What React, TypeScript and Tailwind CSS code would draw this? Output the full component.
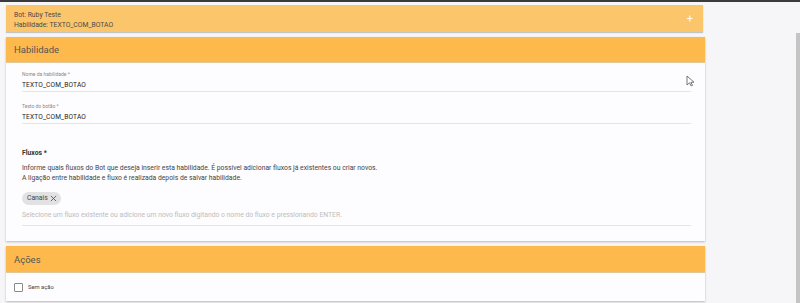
import React from 'react';

function Field({ label, value, gap }: { label: string; value: string; gap: string }) {
  return (
    <div className={gap}>
      <div className="h-[8px] text-[5px] leading-[8px] text-[#8a8a8a]">{label}</div>
      <div className="mt-[2px] h-[10px] text-[6.6px] leading-[10px] text-[#222] tracking-[0.15px]">{value}</div>
      <div className="mt-[1px] h-px bg-[#e6e6e6]" />
    </div>
  );
}

export default function App() {
  return (
    <div className="relative w-[800px] h-[303px] overflow-hidden bg-[#f6f5f7] font-['Roboto',sans-serif]">
      <div className="h-[2px] bg-[#3a3a3a]" />

      <div className="flex">
        <div className="w-[705px] pl-[6px] pt-[3px]">
          {/* Resumo do bot */}
          <div className="w-[697px] h-[27px] bg-[#fbc56b] shadow-[0_1px_1px_rgba(0,0,0,0.2)] flex items-center justify-between pl-[8px] pr-[10px]">
            <div className="pt-[3px] text-[6.8px] leading-[10px] text-[#4a4a4a]">
              <div>Bot: Ruby Teste</div>
              <div>Habilidade: TEXTO_COM_BOTAO</div>
            </div>
            <span className="text-white text-[11px] leading-none">+</span>
          </div>

          {/* Habilidade */}
          <div className="mt-[5px] bg-[#fdfcfe] shadow-[0_1px_2px_rgba(0,0,0,0.25)]">
            <div className="h-[26px] bg-[#fdb94b] flex items-center pl-[8px] pt-[2px] border-b border-[#e0c89a]">
              <span className="text-[9.5px] text-[#555]">Habilidade</span>
            </div>
            <div className="pl-[16px] pr-[14px] pb-[15px] pt-[7px]">
              <Field label="Nome da habilidade *" value="TEXTO_COM_BOTAO" gap="" />
              <Field label="Texto do botão *" value="TEXTO_COM_BOTAO" gap="mt-[10px]" />

              <div className="mt-[24px] h-[10px] text-[6.8px] leading-[10px] font-bold text-[#333]">Fluxos *</div>
              <div className="mt-[5px] text-[6.8px] leading-[10px] text-[#444]">
                <div>Informe quais fluxos do Bot que deseja inserir esta habilidade. É possível adicionar fluxos já existentes ou criar novos.</div>
                <div>A ligação entre habilidade e fluxo é realizada depois de salvar habilidade.</div>
              </div>
              <div className="mt-[7px] inline-flex items-center gap-[2px] h-[13px] rounded-full bg-[#e2e2e2] pl-[5px] pr-[4px]">
                <span className="text-[6.8px] text-[#444]">Canais</span>
                <svg width="7" height="7" viewBox="0 0 8 8" className="text-[#555]">
                  <path d="M1 1L7 7M7 1L1 7" stroke="currentColor" strokeWidth="1" />
                </svg>
              </div>
              <div className="mt-[3px] h-[10px] text-[6.8px] leading-[10px] text-[#bdbdbd]">
                Selecione um fluxo existente ou adicione um novo fluxo digitando o nome do fluxo e pressionando ENTER.
              </div>
              <div className="mt-[5px] h-px bg-[#e6e6e6]" />
            </div>
          </div>

          {/* Ações */}
          <div className="mt-[5px] bg-[#fdfcfe] shadow-[0_1px_2px_rgba(0,0,0,0.25)]">
            <div className="h-[27px] bg-[#fdb94b] flex items-center pl-[8px] pt-[2px] border-b border-[#e0c89a]">
              <span className="text-[9.5px] text-[#555]">Ações</span>
            </div>
            <div className="h-[28px] flex items-center pl-[8px] gap-[5px]">
              <div className="w-[9px] h-[9px] border border-[#888] rounded-[1px] bg-white" />
              <span className="text-[5.8px] text-[#444]">Sem ação</span>
            </div>
          </div>
        </div>

        <div className="flex-1" />
        <div className="w-[4px] mt-[31px] h-[272px] bg-[#c4c4c4]" />
      </div>

      {/* cursor */}
      <svg className="absolute left-[686px] top-[75px]" width="9" height="12" viewBox="0 0 9 12">
        <path d="M1 1L1 10L3.5 7.8L5.2 11L6.5 10.4L4.9 7.3L8 7.2Z" fill="white" stroke="#555" strokeWidth="0.8" />
      </svg>
    </div>
  );
}
